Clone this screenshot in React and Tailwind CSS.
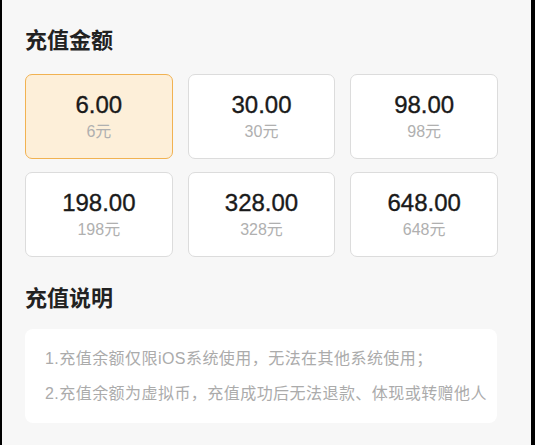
import React from 'react';

const amounts = [
  { value: '6.00', label: '6元' },
  { value: '30.00', label: '30元' },
  { value: '98.00', label: '98元' },
  { value: '198.00', label: '198元' },
  { value: '328.00', label: '328元' },
  { value: '648.00', label: '648元' },
];

const font = { fontFamily: '"Liberation Sans", "Noto Sans CJK SC", sans-serif' };

const AmountCard = ({ item, selected }) => (
  <div
    className={`h-[85px] rounded-[7px] border flex flex-col items-center justify-center gap-[3px] ${
      selected ? 'bg-[#fdefd9] border-[#f1b252]' : 'bg-white border-[#dcdcdc]'
    }`}
  >
    <span className="text-[24px] leading-[28px] text-[#1a1a1a] [-webkit-text-stroke:0.35px_#1a1a1a]">
      {item.value}
    </span>
    <span className="text-[16px] leading-[20px] text-[#b0b0b0]">{item.label}</span>
  </div>
);

export default function App() {
  const selected = 0;

  return (
    <div className="w-[535px] h-[445px] bg-black flex overflow-hidden" style={font}>
      <div className="ml-[2px] w-[529px] h-full bg-[#f7f7f7] pl-[23px]">
        <h2 className="pt-[26px] text-[22px] leading-[30px] font-bold text-[#222]">充值金额</h2>

        <div className="mt-[18px] w-[473px] grid grid-cols-3 gap-x-[15px] gap-y-[13px]">
          {amounts.map((item, i) => (
            <AmountCard key={item.value} item={item} selected={i === selected} />
          ))}
        </div>

        <h2 className="mt-[27px] text-[22px] leading-[30px] font-bold text-[#222]">充值说明</h2>

        <div className="mt-[15px] w-[472px] bg-white rounded-[8px] pl-[20px] py-[12px] text-[16px] leading-[35px] tracking-[0.45px] text-[#ababab]">
          <p>1.充值余额仅限iOS系统使用，无法在其他系统使用；</p>
          <p>2.充值余额为虚拟币，充值成功后无法退款、体现或转赠他人</p>
        </div>
      </div>
    </div>
  );
}
